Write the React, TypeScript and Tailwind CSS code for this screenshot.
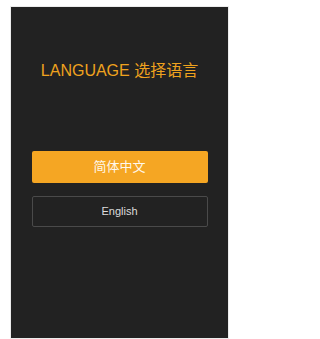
export default function App() {
  return (
    <div
      className="min-h-[339px] bg-white pl-[11px] pt-[7px]"
      style={{ fontFamily: '"Liberation Sans", "Noto Sans CJK SC", sans-serif' }}
    >
      <div className="flex h-[331px] w-[217px] flex-col items-center bg-[#222222] pt-[54px] outline outline-1 outline-[#ececec]">
        <h1 className="h-[20px] text-[16px] leading-[20px] font-normal text-[#efa21e]">
          LANGUAGE 选择语言
        </h1>
        <button className="mt-[70px] flex h-[32px] w-[176px] items-center justify-center rounded-[2px] bg-[#f5a623] text-[13px] text-[#fff8ec]">
          简体中文
        </button>
        <button className="mt-[13px] flex h-[31px] w-[176px] items-center justify-center rounded-[2px] border border-[#4a4a4a] text-[11px] text-[#dddddd]">
          English
        </button>
      </div>
    </div>
  );
}
